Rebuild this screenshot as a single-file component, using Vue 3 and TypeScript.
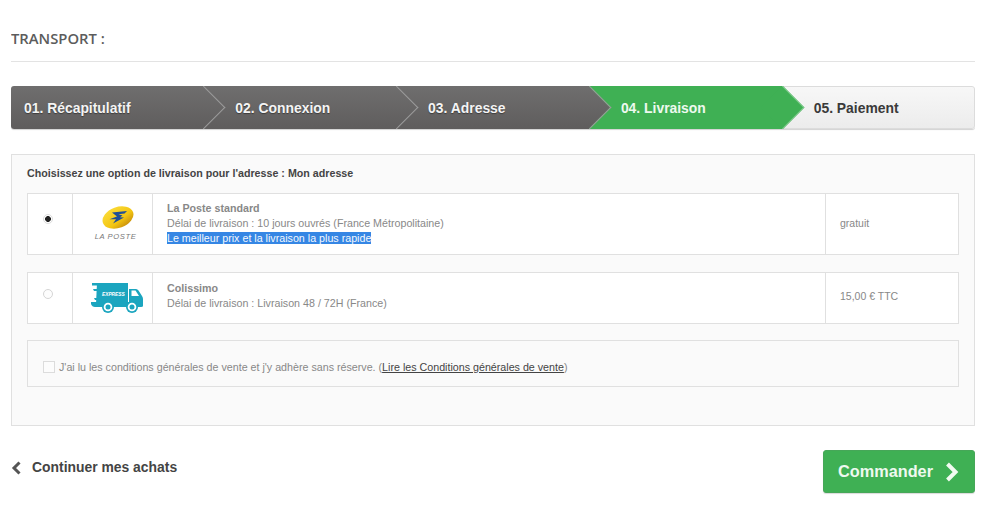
<script setup lang="ts">
const steps = [
  { label: '01. Récapitulatif', kind: 'done' },
  { label: '02. Connexion', kind: 'done' },
  { label: '03. Adresse', kind: 'done' },
  { label: '04. Livraison', kind: 'current' },
  { label: '05. Paiement', kind: 'todo' },
]
</script>

<template>
  <main class="page">
    <h1 class="title">TRANSPORT :</h1>
    <ol class="steps">
      <li v-for="s in steps" :key="s.label" class="step" :class="s.kind">
        <span>{{ s.label }}</span>
      </li>
    </ol>

    <section class="panel">
      <p class="intro">Choisissez une option de livraison pour l'adresse : Mon adresse</p>

      <div class="option first">
        <div class="c-radio"><span class="radio checked"></span></div>
        <div class="c-logo">
          <div class="poste">
            <svg class="poste-mark" width="32" height="25" viewBox="0 0 32 25">
              <defs>
                <linearGradient id="pg" x1="0.2" y1="0" x2="0.7" y2="1">
                  <stop offset="0" stop-color="#fbdc3a" />
                  <stop offset="0.65" stop-color="#f3c512" />
                  <stop offset="1" stop-color="#c98f0c" />
                </linearGradient>
              </defs>
              <ellipse cx="16" cy="12.5" rx="16" ry="10.5" transform="rotate(-20 16 12.5)" fill="url(#pg)" />
              <path d="M10 7.5 L25 6 L22.5 8.6 L16.5 9.2 L20.5 10.6 L18 12.2 L22 12.6 L11 18.5 L14 14.2 L7.5 14.2 L15 11.6 Z" fill="#1f4e96" />
            </svg>
            <span class="poste-name">LA POSTE</span>
          </div>
        </div>
        <div class="c-desc">
          <strong>La Poste standard</strong>
          <span>Délai de livraison : 10 jours ouvrés (France Métropolitaine)</span>
          <span><mark>Le meilleur prix et la livraison la plus rapide</mark></span>
        </div>
        <div class="c-price">gratuit</div>
      </div>

      <div class="option second">
        <div class="c-radio"><span class="radio"></span></div>
        <div class="c-logo">
          <svg class="truck" width="52" height="30" viewBox="0 0 52 30">
            <g fill="#1ba5bf">
              <path d="M1 0 H37 V2.5 H1 Z" />
              <path d="M6 0 H37 V21 H5 Z" />
              <path d="M38 6 H45 Q46.5 6 47.5 7.5 L51 13 Q52 14.5 52 16 V21 H38 Z" />
              <path d="M2 6 H10 V8 H3 Z" />
              <path d="M3 15 H10 V17 H4 Z" />
              <path d="M0 19 H52 V23 Q52 24 50 24 H4 Q1 24 0 21 Z" />
              <circle cx="17" cy="24" r="6" />
              <circle cx="41" cy="24" r="6" />
            </g>
            <circle cx="17" cy="24" r="4.3" fill="#fff" />
            <circle cx="17" cy="24" r="2.5" fill="#1ba5bf" />
            <circle cx="41" cy="24" r="4.3" fill="#fff" />
            <circle cx="41" cy="24" r="2.5" fill="#1ba5bf" />
            <path d="M40.5 7.5 H44.5 L48 13 H40.5 Z" fill="#fff" />
            <text x="11" y="13" class="express">EXPRESS</text>
          </svg>
        </div>
        <div class="c-desc">
          <strong>Colissimo</strong>
          <span>Délai de livraison : Livraison 48 / 72H (France)</span>
        </div>
        <div class="c-price">15,00 € TTC</div>
      </div>

      <div class="terms">
        <span class="check"></span>
        <span>J'ai lu les conditions générales de vente et j'y adhère sans réserve. (<a>Lire les Conditions générales de vente</a>)</span>
      </div>
    </section>

    <footer class="actions">
      <a class="back">
        <svg width="10" height="14" viewBox="0 0 10 14"><path d="M8.5 1.5 L3 7 L8.5 12.5" fill="none" stroke="#555" stroke-width="3" /></svg>
        Continuer mes achats
      </a>
      <a class="order">
        Commander
        <svg width="14" height="20" viewBox="0 0 14 20"><path d="M2.5 2 L10.5 10 L2.5 18" fill="none" stroke="#f1fbf1" stroke-width="4" /></svg>
      </a>
    </footer>
  </main>
</template>

<style>
body { background: #fff; }
</style>

<style scoped>
.page {
  width: 964px;
  height: 514px;
  margin-left: 11px;
  font-family: "Liberation Sans", Arial, sans-serif;
  overflow: hidden;
}
.title {
  margin: 0;
  height: 62px;
  padding-top: 30px;
  box-sizing: border-box;
  border-bottom: 1px solid #e3e3e3;
  font: 600 14.8px/17px "Open Sans", sans-serif;
  color: #5c5c5c;
}
.steps {
  list-style: none;
  margin: 24px 0 0;
  padding: 0;
  height: 43px;
  display: grid;
  grid-template-columns: repeat(4, 192.8px) 1fr;
  border-radius: 3px;
  overflow: hidden;
  box-shadow: 0 1px 1px rgba(0, 0, 0, .18);
}
.step {
  position: relative;
  display: flex;
  align-items: center;
  padding-left: 13px;
  font-size: 13.9px;
  font-weight: 700;
  color: #fff;
}
.step:nth-child(1) { z-index: 5; }
.step:nth-child(2) { z-index: 4; padding-left: 31.5px; }
.step:nth-child(3) { z-index: 3; padding-left: 31.5px; }
.step:nth-child(4) { z-index: 2; padding-left: 31.5px; }
.step:nth-child(5) { z-index: 1; padding-left: 31.5px; }
.step span { position: relative; z-index: 1; }
.done { background: linear-gradient(#6f6e6e, #5f5d5d); color: #f4f4f4; text-shadow: 0 1px 1px rgba(0, 0, 0, .4); }
.current { background: #3fb054; color: #eef9ef; }
.todo {
  background: linear-gradient(#f7f7f7, #ececec);
  color: #3a3a3a;
  border: 1px solid #dcdcdc;
  border-left: 0;
  border-radius: 0 3px 3px 0;
}
.step:not(.todo)::after {
  content: "";
  position: absolute;
  top: 6px;
  right: -15.5px;
  width: 31px;
  height: 31px;
  box-sizing: border-box;
  transform: rotate(45deg);
  border-top: 1px solid #9c9c9c;
  border-right: 1px solid #9c9c9c;
}
.done::after { background: linear-gradient(135deg, #6f6e6e, #5f5d5d); }
.current::after { background: #3fb054; border-color: #7cc98a !important; }
.panel {
  margin-top: 25px;
  height: 272px;
  box-sizing: border-box;
  padding: 11px 15px 0;
  background: #fafafa;
  border: 1px solid #e0e0e0;
}
.intro {
  margin: 0;
  font-size: 10.7px;
  line-height: 14px;
  font-weight: 700;
  color: #444;
}
.option {
  display: grid;
  grid-template-columns: 44px 81px 1fr 133px;
  box-sizing: border-box;
  background: #fff;
  border: 1px solid #e0e0e0;
  color: #888;
  font-size: 10.7px;
  line-height: 15px;
}
.first { margin-top: 13px; height: 62px; }
.second { margin-top: 17px; height: 52px; }
.c-radio { display: flex; justify-content: center; padding: 20px 4px 0 0; box-sizing: border-box; }
.second .c-radio { padding-top: 16px; }
.c-logo {
  border-left: 1px solid #e0e0e0;
  border-right: 1px solid #e0e0e0;
  display: flex;
  align-items: center;
  justify-content: center;
}
.poste { display: flex; flex-direction: column; align-items: center; padding: 0 0 2px 6px; }
.poste-mark { margin-left: 4px; }
.poste-name {
  font-size: 7.6px;
  line-height: 9px;
  font-style: italic;
  letter-spacing: .6px;
  color: #777;
  margin-top: 2px;
}
.truck { margin-left: 8px; }
.express { font: italic 700 4.8px "Liberation Sans", sans-serif; fill: #fff; }
.radio {
  width: 10px;
  height: 10px;
  border-radius: 50%;
  border: 1px solid #d5d5d5;
  background: #fdfdfd;
  box-sizing: border-box;
}
.radio.checked {
  background: radial-gradient(circle, #222 0 2.6px, #fff 3.2px);
  border-color: #ddd;
}
.c-desc {
  display: flex;
  flex-direction: column;
  padding: 7px 14px 0;
}
.second .c-desc { padding-top: 8px; }
.c-desc strong { color: #888; }
.c-desc mark { background: #3586e4; color: #f4f8fd; }
.c-price {
  border-left: 1px solid #e0e0e0;
  padding-left: 14px;
  display: flex;
  align-items: center;
  font-size: 10.5px;
  color: #888;
}
.first .c-price { padding-bottom: 2px; }
.second .c-price { padding-bottom: 4px; }
.terms {
  margin-top: 16px;
  height: 47px;
  box-sizing: border-box;
  border: 1px solid #e0e0e0;
  display: flex;
  align-items: center;
  gap: 4px;
  padding: 6px 0 0 15px;
  font-size: 10.7px;
  color: #888;
}
.check {
  width: 12px;
  height: 12px;
  box-sizing: border-box;
  border: 1px solid #dcdcdc;
  background: #fcfcfc;
}
.terms a { color: #444; text-decoration: underline; }
.actions {
  display: flex;
  justify-content: space-between;
  align-items: flex-start;
  margin-top: 24px;
}
.back {
  display: flex;
  align-items: center;
  gap: 11px;
  margin-top: 9px;
  font-size: 13.9px;
  font-weight: 700;
  line-height: 17px;
  color: #444;
}
.order {
  width: 152px;
  height: 43px;
  box-sizing: border-box;
  display: flex;
  align-items: center;
  gap: 12px;
  padding-left: 14px;
  background: #3fb054;
  border-radius: 3px;
  border: 1px solid #46a758;
  box-shadow: 0 1px 1px rgba(0, 0, 0, .15);
  font-size: 16.3px;
  font-weight: 700;
  color: #eef9ef;
}
</style>
